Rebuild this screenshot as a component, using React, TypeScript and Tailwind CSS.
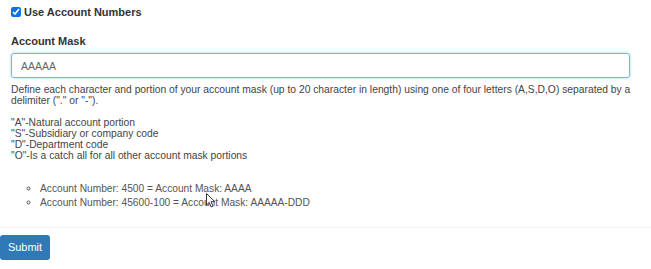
import React from 'react';

const App = () => {
  return (
    <div className="relative w-[651px] h-[269px] bg-white font-['Liberation_Sans',Arial,sans-serif] text-[#333]">
      <div className="px-[11px] pt-[6px]">
        <label className="flex items-center gap-[3px] h-[12px] text-[11px] font-bold">
          <input type="checkbox" defaultChecked className="w-[10px] h-[10px] m-0 accent-[#0b74de]" />
          Use Account Numbers
        </label>
        <div className="mt-[16px] text-[11px] font-bold leading-[14px]">Account Mask</div>
        <input
          defaultValue="AAAAA"
          className="mt-[5px] block w-[619px] h-[25px] px-[9px] text-[10.5px] text-[#666] border border-[#7fb2e3] rounded-[3px] shadow-[0_0_3px_rgba(102,175,233,0.6)] outline-none"
        />
        <div className="mt-[6px] w-[630px] text-[10.3px] leading-[11px] text-[#444]">
          <p>Define each character and portion of your account mask (up to 20 character in length) using one of four letters (A,S,D,O) separated by a delimiter (&quot;.&quot; or &quot;-&quot;).</p>
          <p className="mt-[11px]">&quot;A&quot;-Natural account portion</p>
          <p>&quot;S&quot;-Subsidiary or company code</p>
          <p>&quot;D&quot;-Department code</p>
          <p>&quot;O&quot;-Is a catch all for all other account mask portions</p>
        </div>
        <ul className="mt-[21px] pl-[29px] list-[circle] text-[10.2px] leading-[14px] text-[#555]">
          <li>Account Number: 4500 = Account Mask: AAAA</li>
          <li>Account Number: 45600-100 = Account Mask: AAAAA-DDD</li>
        </ul>
      </div>
      <div className="mt-[17px] border-t border-[#f2f2f2]" />
      <div className="pt-[6px]">
        <button className="w-[50px] h-[25px] rounded-[3px] bg-[#2f7ab6] text-white text-[11px]">Submit</button>
      </div>
      <svg className="absolute left-[206px] top-[193px]" width="10" height="15" viewBox="0 0 10 15">
        <path d="M0.5 0.5 L0.5 12 L3.2 9.4 L5.2 14 L7 13.2 L5 8.7 L8.8 8.7 Z" fill="white" stroke="#222" strokeWidth="0.9" />
      </svg>
    </div>
  );
};

export default App;
